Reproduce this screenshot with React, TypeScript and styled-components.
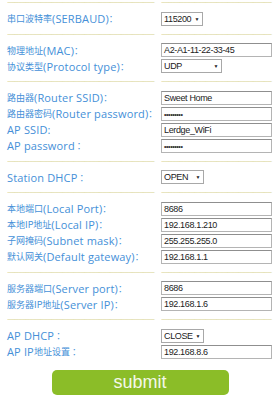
import { Fragment } from "react";
import styled, { createGlobalStyle } from "styled-components";

const GlobalStyle = createGlobalStyle`
  body {
    margin: 0;
    background: #fff;
    font-family: "Open Sans", "Noto Sans CJK SC", sans-serif;
  }
`;

const Page = styled.div`
  width: 280px;
  height: 400px;
  overflow: hidden;
  margin-top: -5px;
`;

const Form = styled.div`
  display: grid;
  grid-template-columns: 150px 113px;
  column-gap: 4px;
  padding: 0 6px 0 7px;
`;

const Tildes = styled.div`
  height: 15.5px;
  line-height: 15.5px;
  font-family: "Liberation Sans", sans-serif;
  font-size: 8px;
  letter-spacing: -1px;
  color: #d8d38e;
  white-space: nowrap;
  overflow: hidden;
`;

const Label = styled.div`
  height: 16px;
  display: flex;
  align-items: center;
  white-space: nowrap;
  font-size: 11px;
  letter-spacing: 0.15px;
  color: #4590d8;
`;

const Zh = styled.span`
  font-family: "Noto Sans CJK SC", sans-serif;
  font-size: 9px;
  letter-spacing: 0;
`;

const Cell = styled.div`
  height: 16px;
  display: flex;
  align-items: center;
`;

const TextBox = styled.div`
  box-sizing: border-box;
  width: 111px;
  height: 14px;
  border: 1px solid #b4b4b4;
  border-top-color: #8f8f8f;
  padding: 0 2px;
  font-family: "Liberation Sans", sans-serif;
  font-size: 9px;
  letter-spacing: -0.35px;
  line-height: 12px;
  color: #222;
  white-space: nowrap;
`;

const Dots = styled.span`
  font-size: 7px;
  letter-spacing: -0.4px;
  font-weight: bold;
  color: #333;
`;

const Select = styled.div<{ $w: number }>`
  box-sizing: border-box;
  width: ${(p) => p.$w}px;
  height: 14px;
  border: 1px solid #a8a8a8;
  padding: 0 3px 0 2px;
  display: flex;
  justify-content: space-between;
  align-items: center;
  font-family: "Liberation Sans", sans-serif;
  font-size: 9px;
  letter-spacing: -0.35px;
  color: #222;
`;

const Arrow = styled.span`
  font-size: 5px;
  color: #222;
`;

const ButtonRow = styled.div`
  display: flex;
  justify-content: center;
  padding-top: 10px;
`;

const Submit = styled.button`
  width: 177px;
  height: 25px;
  border: none;
  border-radius: 5px;
  background: #8bbd28;
  color: #f4f8ea;
  font-family: "Liberation Sans", sans-serif;
  font-size: 18px;
  padding: 0;
  line-height: 25px;
`;

const Sep = () => (
  <>
    <Tildes>{"~".repeat(40)}</Tildes>
    <Tildes>{"~".repeat(30)}</Tildes>
  </>
);

type Field =
  | { zh?: string; en: string; kind: "text"; value: string }
  | { zh?: string; en: string; kind: "pass" }
  | { zh?: string; en: string; kind: "select"; value: string; width: number };

const groups: Field[][] = [
  [{ zh: "串口波特率", en: "(SERBAUD)", kind: "select", value: "115200", width: 42 }],
  [
    { zh: "物理地址", en: "(MAC)", kind: "text", value: "A2-A1-11-22-33-45" },
    { zh: "协议类型", en: "(Protocol type)", kind: "select", value: "UDP", width: 61 },
  ],
  [
    { zh: "路由器", en: "(Router SSID)", kind: "text", value: "Sweet Home" },
    { zh: "路由器密码", en: "(Router password)", kind: "pass" },
    { en: "AP SSID:", kind: "text", value: "Lerdge_WiFi" },
    { en: "AP password", kind: "pass" },
  ],
  [{ en: "Station DHCP", kind: "select", value: "OPEN", width: 43 }],
  [
    { zh: "本地端口", en: "(Local Port)", kind: "text", value: "8686" },
    { zh: "本地IP地址", en: "(Local IP)", kind: "text", value: "192.168.1.210" },
    { zh: "子网掩码", en: "(Subnet mask)", kind: "text", value: "255.255.255.0" },
    { zh: "默认网关", en: "(Default gateway)", kind: "text", value: "192.168.1.1" },
  ],
  [
    { zh: "服务器端口", en: "(Server port)", kind: "text", value: "8686" },
    { zh: "服务器IP地址", en: "(Server IP)", kind: "text", value: "192.168.1.6" },
  ],
  [
    { en: "AP DHCP", kind: "select", value: "CLOSE", width: 43 },
    { en: "AP IP", zh: "地址设置", kind: "text", value: "192.168.8.6" },
  ],
];

const FieldLabel = ({ f }: { f: Field }) => {
  if (f.en === "AP SSID:") return <Label>AP SSID:</Label>;
  if (f.en === "AP IP")
    return (
      <Label>
        AP IP<Zh>{f.zh}</Zh>
        <Zh>&nbsp;：</Zh>
      </Label>
    );
  return (
    <Label>
      {f.zh && <Zh>{f.zh}</Zh>}
      {f.en}
      <Zh>{f.zh ? "：" : "\u00a0："}</Zh>
    </Label>
  );
};

const FieldInput = ({ f }: { f: Field }) => {
  if (f.kind === "select")
    return (
      <Select $w={f.width}>
        {f.value}
        <Arrow>▼</Arrow>
      </Select>
    );
  if (f.kind === "pass")
    return (
      <TextBox>
        <Dots>•••••••••</Dots>
      </TextBox>
    );
  return <TextBox>{f.value}</TextBox>;
};

export default function App() {
  return (
    <Page>
      <GlobalStyle />
      <Form>
        {groups.map((g, gi) => (
          <Fragment key={gi}>
            <Sep />
            {g.map((f, fi) => (
              <Fragment key={fi}>
                <FieldLabel f={f} />
                <Cell>
                  <FieldInput f={f} />
                </Cell>
              </Fragment>
            ))}
          </Fragment>
        ))}
      </Form>
      <ButtonRow>
        <Submit>submit</Submit>
      </ButtonRow>
    </Page>
  );
}
